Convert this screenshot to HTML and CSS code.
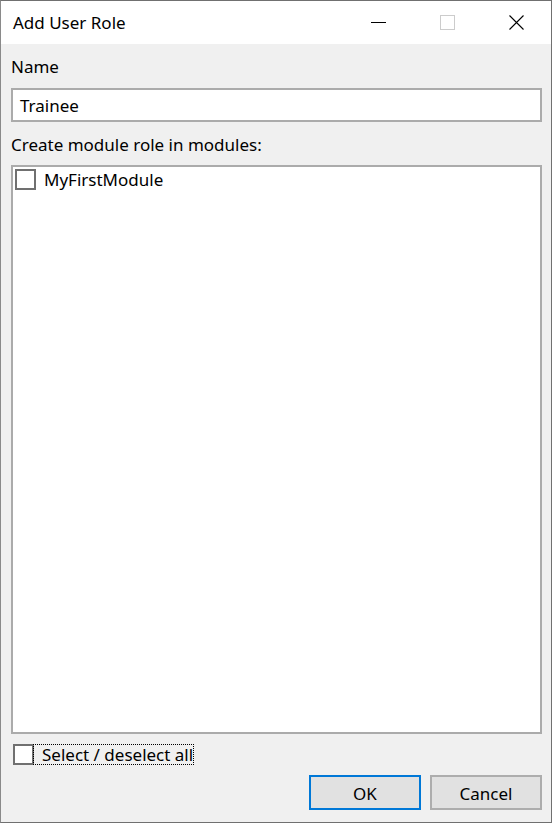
FILE: index.html
```html
<!DOCTYPE html>
<html>
<head>
<meta charset="utf-8">
<link rel="stylesheet" href="styles.css">
</head>
<body>
<div class="window">
  <div class="titlebar">
    <div class="title">Add User Role</div>
    <div class="caption-buttons">
      <div class="cap-btn">
        <svg width="15" height="15" viewBox="0 0 15 15"><line x1="0" y1="7.5" x2="15" y2="7.5" stroke="#000" stroke-width="1"/></svg>
      </div>
      <div class="cap-btn">
        <svg width="15" height="15" viewBox="0 0 15 15"><rect x="0.5" y="0.5" width="14" height="14" fill="none" stroke="#cccccc" stroke-width="1"/></svg>
      </div>
      <div class="cap-btn">
        <svg width="15" height="15" viewBox="0 0 15 15"><path d="M0.5 0.5 L14.5 14.5 M14.5 0.5 L0.5 14.5" stroke="#000" stroke-width="1.1" fill="none"/></svg>
      </div>
    </div>
  </div>
  <div class="content">
    <div class="label name-label">Name</div>
    <div class="textbox">Trainee</div>
    <div class="label modules-label">Create module role in modules:</div>
    <div class="listbox">
      <div class="list-item">
        <span class="checkbox"></span>
        <span class="item-text">MyFirstModule</span>
      </div>
    </div>
    <div class="select-all">
      <span class="checkbox"></span>
      <span class="focus-text">Select / deselect all</span>
    </div>
    <div class="buttons">
      <div class="btn btn-default">OK</div>
      <div class="btn">Cancel</div>
    </div>
  </div>
</div>
</body>
</html>
```
FILE: styles.css
```css
* { box-sizing: border-box; }
html, body { margin: 0; padding: 0; background: #f0f0f0; }
body {
  font-family: "Noto Sans", "Open Sans", sans-serif;
  font-size: 17px;
  color: #000;
}
.window {
  width: 552px;
  height: 823px;
  border: 1px solid #707070;
  border-left-color: #8a8a8a;
  background: #f0f0f0;
  display: flex;
  flex-direction: column;
}
.titlebar {
  height: 43px;
  background: #fff;
  display: flex;
  align-items: center;
  justify-content: space-between;
  padding-left: 12px;
}
.title {
  font-size: 17px;
  padding-bottom: 1px;
}
.caption-buttons {
  display: flex;
  height: 100%;
}
.cap-btn {
  width: 69px;
  height: 43px;
  display: flex;
  align-items: center;
  justify-content: center;
}
.cap-btn svg { display: block; }
.content {
  flex: 1;
  display: flex;
  flex-direction: column;
  padding: 0 9px 0 10px;
}
.label {
  line-height: 22px;
}
.name-label { margin-top: 12px; height: 32px; }
.textbox {
  height: 34px;
  border: 2px solid #ababab;
  background: #fff;
  padding-left: 7px;
  padding-top: 1px;
  line-height: 30px;
}
.modules-label { margin-top: 12px; height: 31px; }
.listbox {
  height: 569px;
  border: 2px solid #ababab;
  background: #fff;
  padding: 2px 2px;
}
.list-item {
  display: flex;
  align-items: center;
  height: 21px;
}
.checkbox {
  width: 21px;
  height: 21px;
  border: 2px solid #707070;
  background: #fff;
  flex: none;
}
.item-text {
  margin-left: 8px;
}
.select-all {
  display: flex;
  align-items: center;
  margin-top: 10px;
  margin-left: 2px;
  height: 21px;
}
.focus-text {
  height: 21px;
  border: 1px dotted #000;
  padding: 0 0 0 8px;
  width: 161px;
  margin-left: -1px;
  overflow: hidden;
  white-space: nowrap;
  line-height: 19px;
}
.buttons {
  display: flex;
  justify-content: flex-end;
  gap: 9px;
  margin-top: 10px;
}
.btn {
  width: 112px;
  height: 35px;
  border: 2px solid #adadad;
  background: #e1e1e1;
  text-align: center;
  padding-top: 1px;
  line-height: 31px;
}
.btn-default {
  border-color: #0078d7;
}
```
